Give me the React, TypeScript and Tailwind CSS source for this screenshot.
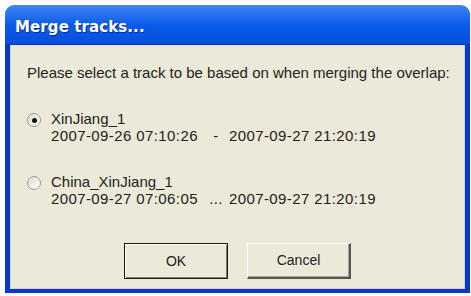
import React, { useState } from "react";

const TRACKS = [
  { id: "a", name: "XinJiang_1", from: "2007-09-26 07:10:26", sep: "-", to: "2007-09-27 21:20:19" },
  { id: "b", name: "China_XinJiang_1", from: "2007-09-27 07:06:05", sep: "...", to: "2007-09-27 21:20:19" },
];

const Radio = ({ checked }: { checked: boolean }) => (
  <span className="relative mt-[3px] flex h-[14px] w-[14px] shrink-0 items-center justify-center rounded-full border border-[#9a9a9a] bg-gradient-to-br from-[#dcdcd4] to-white">
    {checked && <span className="h-[5px] w-[5px] rounded-full bg-[#111]" />}
  </span>
);

export default function App() {
  const [selected, setSelected] = useState("a");

  return (
    <div className="h-[296px] w-[471px] bg-white px-[5px] pt-[5px]" style={{ fontFamily: '"Liberation Sans", Arial, sans-serif' }}>
      <div className="flex h-[288px] w-[465px] flex-col overflow-hidden rounded-t-[9px]">
        {/* Title bar */}
        <div className="flex h-[40px] shrink-0 items-center border-b border-[#0a3ab8] bg-gradient-to-b from-[#3d86f6] via-[#0a5ce9] to-[#064fdc] pl-[10px] pt-[5px]">
          <span className="text-[15px] font-bold tracking-[0.1px] text-white" style={{ fontFamily: '"DejaVu Sans", sans-serif', textShadow: "1px 1px 0 #0a2a8a" }}>
            Merge tracks...
          </span>
        </div>

        {/* Body */}
        <div className="flex flex-1 flex-col border-x-[5px] border-b-[4px] border-x-[#0838c8] border-b-[#0838c8] bg-[#ece9d8] text-[15px] text-[#222]">
          <div className="flex flex-1 flex-col border-x border-b border-[#c4d4f4] px-[16px] pt-[19px]">
            <p className="whitespace-nowrap leading-[17px]">Please select a track to be based on when merging the overlap:</p>

            <div className="mt-[29px] flex flex-col gap-[29px]">
              {TRACKS.map((t) => (
                <label key={t.id} className="flex cursor-default gap-[10px]" onClick={() => setSelected(t.id)}>
                  <Radio checked={selected === t.id} />
                  <div className="flex flex-col leading-[17px]">
                    <span>{t.name}</span>
                    <span className="flex tracking-[0.4px]">
                      <span className="w-[152px]">{t.from}</span>
                      <span className="w-[26px] text-center">{t.sep}</span>
                      <span>{t.to}</span>
                    </span>
                  </div>
                </label>
              ))}
            </div>

            <div className="mt-[36px] flex justify-center gap-[19px]">
              <button className="h-[36px] w-[104px] border border-[#1a1a1a] bg-[#ece9d8] text-[14px] shadow-[inset_1px_1px_0_#fff,inset_-1px_-1px_0_#7a7a7a]">
                OK
              </button>
              <button className="h-[36px] w-[104px] border-t border-l border-r-2 border-b-2 border-t-[#fff] border-l-[#fff] border-r-[#555] border-b-[#555] bg-[#ece9d8] text-[14px] shadow-[inset_-1px_-1px_0_#a8a59a]">
                Cancel
              </button>
            </div>
          </div>
        </div>
      </div>
    </div>
  );
}
